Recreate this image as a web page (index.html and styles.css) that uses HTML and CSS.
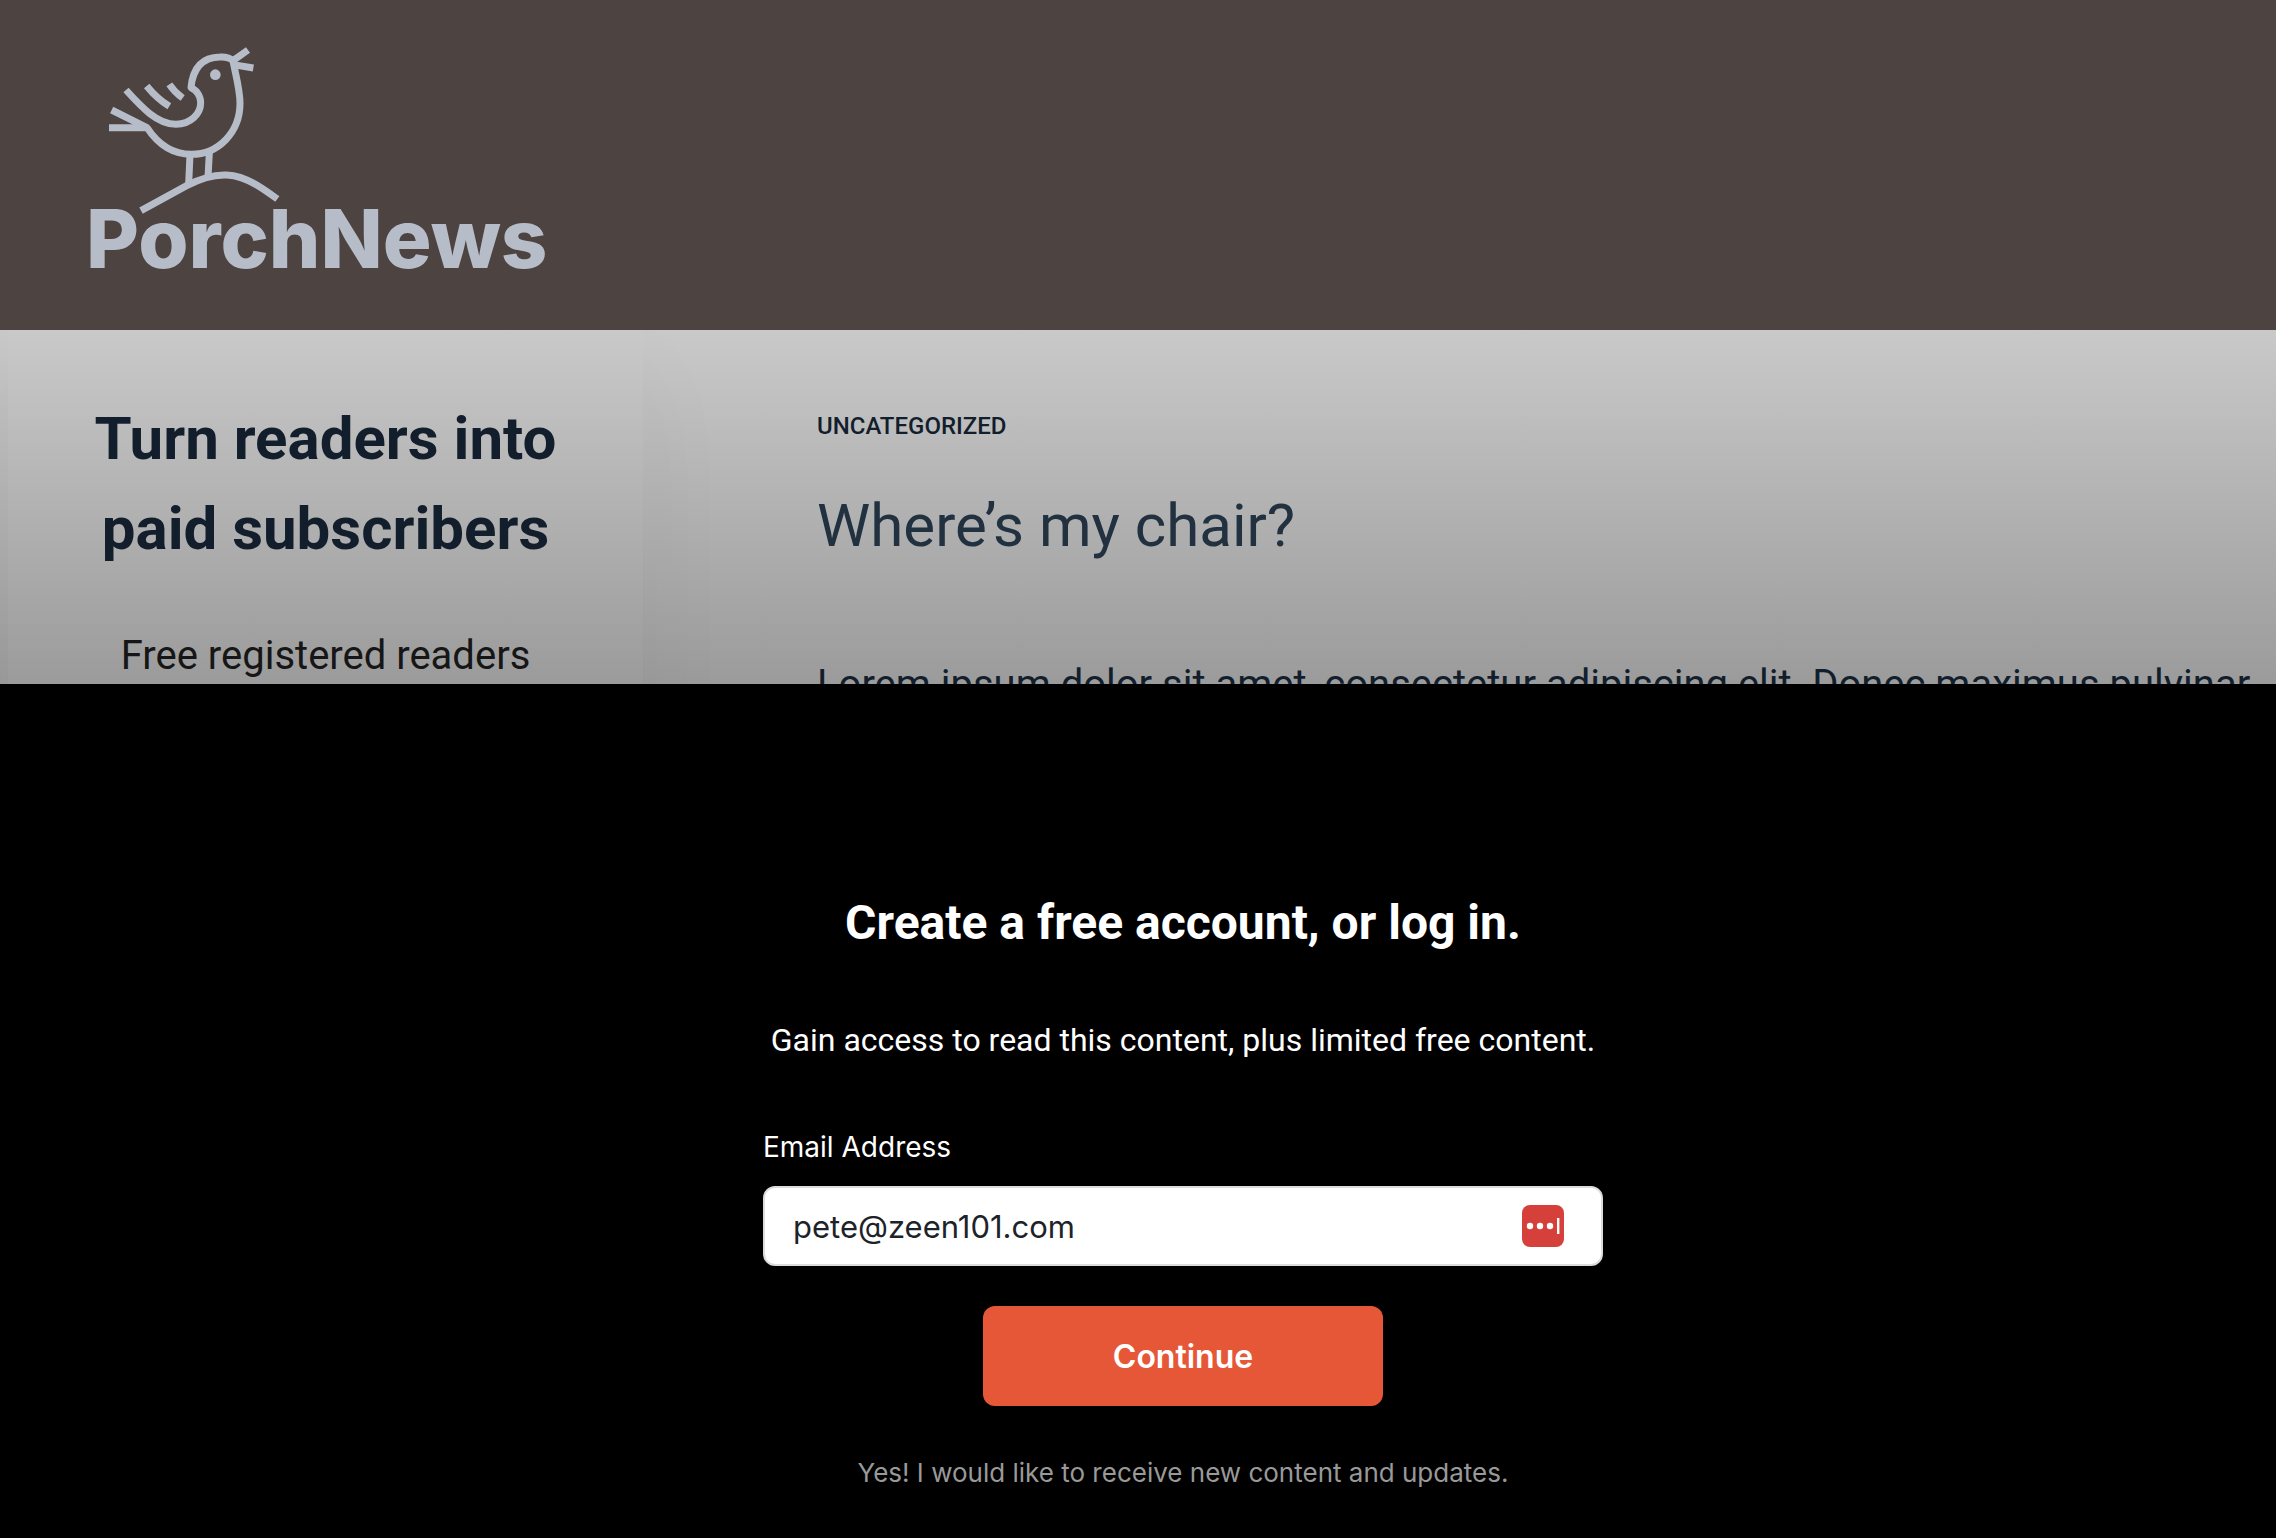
FILE: index.html
```html
<!DOCTYPE html>
<html lang="en">
<head>
<meta charset="UTF-8">
<meta name="viewport" content="width=device-width, initial-scale=1">
<title>Where’s my chair? - PorchNews</title>
<link rel="stylesheet" href="styles.css">
</head>
<body>

<header class="site-header">
  <a href="#" class="logo" aria-label="PorchNews">
    <svg viewBox="30 40 1380 690" class="logo-image">
      <!-- bird -->
      <g fill="none" stroke="currentColor" stroke-width="21" stroke-linejoin="round">
        <path d="M138 178C185 230 232 281 288 281C332 280 362 250 362 216C362 196 350 178 333 171C338 118 362 80 420 79C438 78 450 81 459 90C466 130 480 175 480 218C480 305 415 371 334 371C275 371 232 338 201 291L87 291"/>
        <path d="M201 291L95 238M200 166Q232 205 268 227M268 161Q284 185 308 202M459 90L504 58M459 102L520 112"/>
        <path d="M330 372L326 460M388 366L384 440"/>
        <path d="M183 540L320 465C415 415 475 430 530 463C555 478 574 492 592 505"/>
      </g>
      <circle cx="406" cy="132" r="16" fill="currentColor"/>
      <text x="18" y="711" class="logo-text">PorchNews</text>
    </svg>
  </a>
</header>

<main class="content">
  <aside class="sidebar">
    <h2>Turn readers into paid subscribers</h2>
    <p>Free registered readers</p>
  </aside>
  <article class="article">
    <a href="#" class="category">Uncategorized</a>
    <h1>Where’s my chair?</h1>
    <p>Lorem ipsum dolor sit amet, consectetur adipiscing elit. Donec maximus pulvinar</p>
  </article>
</main>

<section class="paywall">
  <form class="paywall-form">
    <h2>Create a free account, or log in.</h2>
    <p class="paywall-text">Gain access to read this content, plus limited free content.</p>
    <label for="email">Email Address</label>
    <div class="email-field">
      <input type="email" id="email" value="pete@zeen101.com">
      <button type="button" class="fill-btn" aria-label="Fill email">
        <svg viewBox="0 0 42 42">
          <rect width="42" height="42" rx="8" fill="#d6403a"/>
          <g fill="#fff">
            <circle cx="8" cy="21" r="3.2"/>
            <circle cx="18" cy="21" r="3.2"/>
            <circle cx="28" cy="21" r="3.2"/>
            <rect x="35" y="13" width="2.4" height="16"/>
          </g>
        </svg>
      </button>
    </div>
    <button type="submit" class="continue-btn">Continue</button>
    <p class="consent">Yes! I would like to receive new content and updates.</p>
  </form>
</section>

</body>
</html>
```
FILE: styles.css
```css
* {
  box-sizing: border-box;
}

body {
  margin: 0;
  font-family: Roboto, Arial, sans-serif;
  background-color: #9b9b9b;
  color: #121e2c;
  overflow: hidden;
}

h1, h2, p {
  margin: 0;
}

/* Header */
.site-header {
  padding: 44px 90px 56px;
  background-color: #4d4341;
}

.logo {
  display: block;
  width: 460px;
  color: #b6bdc8;
}

.logo-image {
  display: block;
  width: 100%;
  overflow: visible;
}

.logo-text {
  font-family: Inter, Arial, sans-serif;
  font-size: 244px;
  font-weight: 800;
  fill: currentColor;
}

/* Page behind the paywall */
.content {
  display: flex;
  padding-left: 8px;
  background: linear-gradient(#c9c9c9, #9b9b9b 354px);
  overflow: hidden;
}

.sidebar {
  flex: 0 0 28%;
  padding: 64px 64px 200px;
  text-align: center;
  box-shadow: 0 40px 100px rgba(0, 0, 0, 0.04);
}

.sidebar h2 {
  font-size: 60px;
  font-weight: 700;
  line-height: 90px;
}

.sidebar p {
  margin-top: 52px;
  font-size: 40px;
  line-height: 60px;
  color: #161616;
}

.article {
  flex: 1;
  padding: 76px 0 0 174px;
}

.category {
  display: block;
  font-size: 24px;
  font-weight: 500;
  line-height: 40px;
  text-transform: uppercase;
  text-decoration: none;
  color: inherit;
}

.article h1 {
  margin-top: 40px;
  font-size: 60px;
  font-weight: 400;
  line-height: 80px;
  color: #213140;
}

.article p {
  margin-top: 89px;
  font-size: 40px;
  line-height: 60px;
}

/* Paywall */
.paywall {
  position: fixed;
  bottom: 0;
  left: 0;
  right: 0;
  padding: 209px 0 45px 90px;
  background-color: #000;
  color: #fff;
}

.paywall-form {
  display: flex;
  flex-direction: column;
  max-width: 840px;
  margin: 0 auto;
}

.paywall-form h2 {
  font-size: 48px;
  font-weight: 700;
  line-height: 60px;
  text-align: center;
}

.paywall-text {
  margin: 63px 0;
  font-size: 32px;
  line-height: 48px;
  text-align: center;
  white-space: nowrap;
}

.paywall-form label {
  font-family: Inter, Arial, sans-serif;
  font-size: 28px;
  line-height: 40px;
}

.email-field {
  display: flex;
  align-items: center;
  height: 80px;
  margin-top: 19px;
  padding: 0 37px 0 28px;
  background-color: #fff;
  border: 2px solid #dcdcdc;
  border-radius: 12px;
}

.email-field input {
  flex: 1;
  min-width: 0;
  padding: 0;
  border: none;
  outline: none;
  background: none;
  font-family: Inter, Arial, sans-serif;
  font-size: 31px;
  color: #1d2329;
}

.fill-btn {
  width: 42px;
  height: 42px;
  padding: 0;
  border: none;
  background: none;
  cursor: pointer;
}

.fill-btn svg {
  display: block;
}

.continue-btn {
  align-self: center;
  width: 400px;
  height: 100px;
  margin-top: 40px;
  border: none;
  border-radius: 12px;
  background-color: #e65737;
  color: #fff;
  font-family: Inter, Arial, sans-serif;
  font-size: 32px;
  font-weight: 600;
  cursor: pointer;
}

.consent {
  margin-top: 47px;
  font-family: Inter, Arial, sans-serif;
  font-size: 26px;
  line-height: 40px;
  text-align: center;
  color: #999;
}
```
